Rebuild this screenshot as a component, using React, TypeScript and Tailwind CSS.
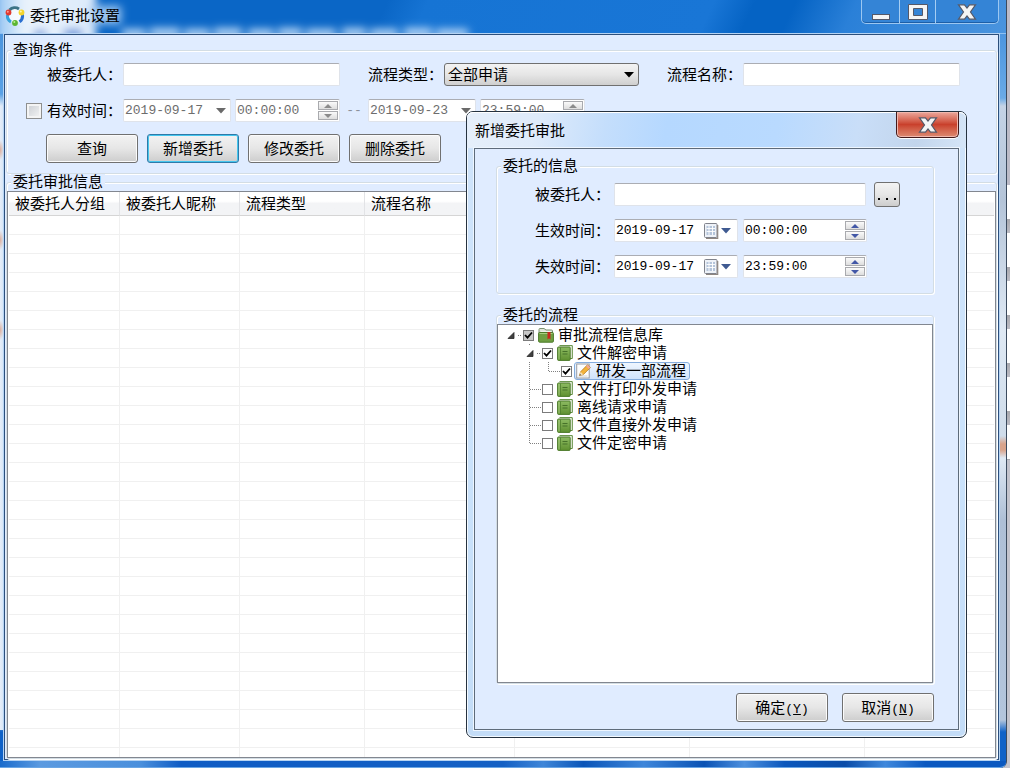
import { useState } from "react";
import type { ReactNode } from "react";

const group =
  "min-w-0 rounded-[3px] border border-[#d3dde4] shadow-[1px_1px_0_white,inset_1px_1px_0_white]";
const legend = "ml-1 bg-[#e0ecff] px-0.5 leading-4";
const field =
  "h-[23px] rounded-[2px] border border-[#dfe3ea] border-t-[#abadb3] bg-white";
const button =
  "h-[29px] w-[92px] rounded-[3px] border border-[#707070] bg-linear-to-b from-[#f3f3f3] via-[#e6e6e6] to-[#cdcdcd] text-center leading-none shadow-[inset_0_0_0_1px_#fbfbfb]";
const digits =
  "min-w-0 flex-1 bg-transparent pl-px font-['Liberation_Mono',monospace] text-[13px] outline-none";

function CloseGlyph() {
  return (
    <svg width="20" height="16" viewBox="0 0 20 16">
      <path
        d="M1.500 0.800H7.500L10 4L12.500 0.800H18.500L13.500 8L18.500 15.200H12.500L10 12L7.500 15.200H1.500L6.500 8Z"
        fill="#f4f4f4"
        stroke="#545868"
        strokeWidth="1.200"
      />
    </svg>
  );
}

function Logo() {
  return (
    <svg width="20" height="20" viewBox="0 0 20 20" aria-hidden="true">
      <circle cx="10" cy="10" r="7" fill="#ffffff" fillOpacity="0.800" />
      <g fill="none" strokeWidth="3">
        <path d="M4.500 4A7.600 7.600 0 0 1 14 3" stroke="#3c7386" />
        <path d="M17.300 8A7.600 7.600 0 0 1 14.500 15.800" stroke="#2a6fd0" />
        <path d="M2.400 9A7.600 7.600 0 0 0 6 16" stroke="#35a2dc" />
      </g>
      <circle cx="3.500" cy="6.500" r="2.900" fill="#e0392f" />
      <circle cx="16.500" cy="6.500" r="2.900" fill="#f4d42c" />
      <circle cx="10" cy="17" r="2.900" fill="#5cb531" />
      <circle cx="2.800" cy="5.700" r="1" fill="#ff9b90" />
      <circle cx="15.800" cy="5.600" r="1" fill="#fff7b0" />
      <circle cx="9.300" cy="16" r="1" fill="#b8ee90" />
    </svg>
  );
}

function Triangle({ color }: { color: string }) {
  return (
    <svg width="10" height="6" viewBox="0 0 10 6">
      <path d="M0 0H10L5 5.500Z" fill={color} />
    </svg>
  );
}

function CalendarGlyph() {
  return (
    <svg width="15" height="16" viewBox="0 0 15 16">
      <rect x="0.500" y="0.500" width="12.500" height="14" rx="1" fill="#eef2f8" stroke="#80838c" />
      <path d="M13.700 2V15.500H2" fill="none" stroke="#8d8580" strokeWidth="1.200" />
      <rect x="2.500" y="3" width="8.500" height="9" fill="#b4c4da" />
      <path d="M2.500 5.500H11M2.500 8.500H11M5 3V12M8.500 3V12" stroke="#ffffff" strokeWidth="0.900" />
    </svg>
  );
}

function Spinner({ disabled }: { disabled?: boolean }) {
  const color = disabled ? "#8b8b8b" : "#4257a6";
  const part =
    "grid h-[9px] w-5 place-items-center border border-[#a9aaae] bg-linear-to-b from-[#fafafa] to-[#dedede]";
  return (
    <span className="flex flex-col gap-px">
      <button type="button" aria-label="增加" disabled={disabled} className={part}>
        <svg width="8" height="4" viewBox="0 0 8 4">
          <path d="M4 0L8 4H0Z" fill={color} />
        </svg>
      </button>
      <button type="button" aria-label="减少" disabled={disabled} className={part}>
        <svg width="8" height="4" viewBox="0 0 8 4">
          <path d="M0 0H8L4 4Z" fill={color} />
        </svg>
      </button>
    </span>
  );
}

function QueryDate({ label, value }: { label: string; value: string }) {
  return (
    <span className={`${field} flex w-[108px] items-center pr-1`}>
      <input aria-label={label} disabled defaultValue={value} className={`${digits} text-[#6d6d6d]`} />
      <button type="button" aria-label="选择日期" disabled>
        <Triangle color="#6a6a6a" />
      </button>
    </span>
  );
}

function QueryTime({ label, value }: { label: string; value: string }) {
  return (
    <span className={`${field} flex w-[105px] items-center pr-px`}>
      <input aria-label={label} disabled defaultValue={value} className={`${digits} text-[#6d6d6d]`} />
      <Spinner disabled />
    </span>
  );
}

function DateTimeRow({ id, label, date, time }: { id: string; label: string; date: string; time: string }) {
  return (
    <div className="flex h-[23px] items-center">
      <label htmlFor={id} className="w-[79px]">
        {label}
      </label>
      <span className={`${field} flex w-[124px] items-center gap-0.5 pr-1.5`}>
        <input id={id} defaultValue={date} className={digits} />
        <button type="button" aria-label="选择日期" className="flex items-center gap-0.5">
          <CalendarGlyph />
          <Triangle color="#3f5a91" />
        </button>
      </span>
      <span className={`${field} ml-[5px] flex w-[124px] items-center pr-px`}>
        <input aria-label={`${label}时刻`} defaultValue={time} className={digits} />
        <Spinner />
      </span>
    </div>
  );
}

function BookIcon() {
  return (
    <svg width="16" height="16" viewBox="0 0 16 16">
      <defs>
        <linearGradient id="book" x1="0" y1="0" x2="0" y2="1">
          <stop offset="0" stopColor="#8dbb62" />
          <stop offset="1" stopColor="#5f9030" />
        </linearGradient>
      </defs>
      <path d="M2.500 0.600H15.300V13.500H13" fill="#f4f7ee" stroke="#5d8a3c" />
      <rect x="0.600" y="2" width="12.600" height="13.400" rx="0.800" fill="url(#book)" stroke="#4c7a2a" />
      <path d="M3.500 2.500V15" stroke="#4f7f2d" strokeWidth="0.800" />
      <path d="M5.500 6.500H10.500M5.500 9H10.500" stroke="#47722a" />
      <path d="M2 3V14.500" stroke="#a9cf83" strokeWidth="0.900" />
    </svg>
  );
}

function FolderIcon() {
  return (
    <svg width="16" height="16" viewBox="0 0 16 16">
      <path d="M1 5V2.500Q1 1.500 2 1.500H6L8 3H13.500Q14.500 3 14.500 4V7H1Z" fill="#dfe5d8" stroke="#7b9170" />
      <path d="M3 4.500H13V7H3Z" fill="#ffffff" />
      <rect x="0.600" y="5.500" width="14.800" height="9.700" rx="1" fill="#6f9f42" stroke="#4c7a2a" />
      <path d="M1.500 6.500H14.500" stroke="#a9cf83" />
      <path d="M9.500 5H12.500V12.500L11 11.300L9.500 12.500Z" fill="#c8281f" />
    </svg>
  );
}

function NoteIcon() {
  return (
    <svg width="16" height="16" viewBox="0 0 16 16">
      <rect x="0.700" y="1" width="12.500" height="14" fill="#fdfdfd" stroke="#9a9ca2" />
      <path d="M2.500 13H11.500" stroke="#d0d3d8" />
      <path d="M3.500 12.500L4.600 8.800L11.500 1.800L14.400 4.500L7.300 11.600Z" fill="#f3b33a" stroke="#b87a1c" strokeWidth="0.800" />
      <path d="M11.500 1.800L14.400 4.500L12.900 6L10.100 3.200Z" fill="#efa79a" />
      <path d="M3.500 12.500L4.600 8.800L7.300 11.600Z" fill="#f3dfba" />
      <path d="M3.500 12.500L4 10.900L5 12Z" fill="#333333" />
    </svg>
  );
}

function TreeCheck({ id, initial, grey }: { id: string; initial: boolean; grey?: boolean }) {
  const [on, setOn] = useState(initial);
  return (
    <span className="grid h-[11px] w-[11px] shrink-0">
      <input
        id={id}
        type="checkbox"
        checked={on}
        onChange={() => setOn(!on)}
        className={`col-start-1 row-start-1 h-[11px] w-[11px] appearance-none border border-[#7b7b7b] ${grey ? "bg-[#c8c8c8]" : "bg-white"}`}
      />
      {on && (
        <svg className="pointer-events-none col-start-1 row-start-1" width="11" height="11" viewBox="0 0 11 11">
          <path d="M2 5L4.500 7.700L9 2.500" fill="none" stroke="#000000" strokeWidth="1.800" />
        </svg>
      )}
    </span>
  );
}

type Guide = { width: number; arrow?: number; lines: string };
type Node = { id: string; label: string; guide: Guide; icon: ReactNode; on?: boolean; grey?: boolean; selected?: boolean };

const siblingGuide: Guide = { width: 44, lines: "M31.500 0V18M32 9.500H43" };
const nodes: Node[] = [
  { id: "n1", label: "审批流程信息库", guide: { width: 25, arrow: 10, lines: "M20 9.500H24" }, icon: <FolderIcon />, on: true, grey: true },
  { id: "n2", label: "文件解密申请", guide: { width: 44, arrow: 29, lines: "M39 9.500H43M31.500 0V2" }, icon: <BookIcon />, on: true },
  { id: "n3", label: "研发一部流程", guide: { width: 63, lines: "M31.500 0V18M50.500 0V9M51 9.500H62" }, icon: <NoteIcon />, on: true, selected: true },
  { id: "n4", label: "文件打印外发申请", guide: siblingGuide, icon: <BookIcon /> },
  { id: "n5", label: "离线请求申请", guide: siblingGuide, icon: <BookIcon /> },
  { id: "n6", label: "文件直接外发申请", guide: siblingGuide, icon: <BookIcon /> },
  { id: "n7", label: "文件定密申请", guide: { width: 44, lines: "M31.500 0V9M32 9.500H43" }, icon: <BookIcon /> },
];

function TreeRow({ node }: { node: Node }) {
  const { guide } = node;
  return (
    <li className="flex h-[18px] items-center">
      <svg className="shrink-0" width={guide.width} height="18" viewBox={`0 0 ${guide.width} 18`}>
        <path d={guide.lines} stroke="#808080" strokeDasharray="1 1" fill="none" />
        {guide.arrow !== undefined && (
          <path d={`M${guide.arrow} 12.500L${guide.arrow + 6} 6.500V12.500Z`} fill="#404040" stroke="#262626" strokeWidth="0.800" />
        )}
      </svg>
      <TreeCheck id={node.id} initial={!!node.on} grey={node.grey} />
      <label
        htmlFor={node.id}
        className={`ml-0.5 flex h-[18px] items-center gap-1 rounded-[3px] border px-px pr-[3px] leading-4 ${
          node.selected ? "border-[#84acdd] bg-linear-to-b from-[#eff6fe] to-[#cfe3fc]" : "border-transparent"
        }`}
      >
        {node.icon}
        <span>{node.label}</span>
      </label>
    </li>
  );
}

function Dialog() {
  return (
    <section
      role="dialog"
      aria-labelledby="dialog-title"
      className="absolute top-[111px] left-[466px] w-[501px] rounded-[7px] border border-[#26323f] bg-linear-to-b from-[#cfe3fa] via-[#cbe3fc] to-[#c3dcf7] p-[7px] pt-0 shadow-[inset_0_0_0_1px_#f4faff]"
    >
      <header className="-mx-[7px] flex h-9 justify-between rounded-t-[6px] bg-[linear-gradient(100deg,#e6effa_0,#dfebfa_14%,#c4defc_28%,#b5d8ff_40%,#b9daff_62%,#c9def8_78%,#c2d5ec_90%,#d6e6f8_100%)] pr-[7px] pl-2 shadow-[inset_0_1px_0_white]">
        <h2 id="dialog-title" className="pt-[10px] leading-[18px]">
          新增委托审批
        </h2>
        <button
          type="button"
          aria-label="关闭"
          className="grid h-[26px] w-[63px] place-items-center rounded-b-[5px] border border-t-0 border-[#43191a] bg-linear-to-b from-[#eba79c] from-0% via-[#c9402c] via-50% to-[#dc8a72] shadow-[inset_0_0_0_1px_#f0b8ae,0_1px_0_white]"
        >
          <CloseGlyph />
        </button>
      </header>
      <form
        className="border border-[#5e6b7a] bg-[#e0ecff] pt-[9px] pr-[24px] pb-[7px] pl-[21px] shadow-[0_0_0_1px_#eef6ff]"
        onSubmit={(e) => e.preventDefault()}
      >
        <fieldset className={group}>
          <legend className={legend}>委托的信息</legend>
          <div className="flex flex-col gap-[13px] pt-[9px] pb-[15px] pl-[38px]">
            <div className="flex h-[23px] items-center">
              <label htmlFor="delegate" className="w-[79px]">
                被委托人：
              </label>
              <input id="delegate" className={`${field} w-[252px]`} />
              <button
                type="button"
                aria-label="选择被委托人"
                className="ml-2 grid h-[25px] w-[26px] place-items-center rounded-[3px] border border-[#707070] bg-linear-to-b from-[#f3f3f3] via-[#e6e6e6] to-[#cdcdcd]"
              >
                <svg width="18" height="12" viewBox="0 0 18 12">
                  <path d="M0 9H2V11H0ZM8 9H10V11H8ZM16 9H18V11H16Z" fill="#000000" />
                </svg>
              </button>
            </div>
            <DateTimeRow id="start" label="生效时间：" date="2019-09-17" time="00:00:00" />
            <DateTimeRow id="end" label="失效时间：" date="2019-09-17" time="23:59:00" />
          </div>
        </fieldset>
        <fieldset className={`${group} mt-[13px]`}>
          <legend className={legend}>委托的流程</legend>
          <ul className="mt-px h-[359px] overflow-y-auto border border-[#828790] bg-white pt-px">
            {nodes.map((n) => (
              <TreeRow key={n.id} node={n} />
            ))}
          </ul>
        </fieldset>
        <div className="mt-[9px] flex justify-end gap-[14px]">
          <button type="submit" className={button}>
            确定
            <span className="font-['Liberation_Mono',monospace] text-[13px]">
              (<u>Y</u>)
            </span>
          </button>
          <button type="button" className={button}>
            取消
            <span className="font-['Liberation_Mono',monospace] text-[13px]">
              (<u>N</u>)
            </span>
          </button>
        </div>
      </form>
    </section>
  );
}

const columns = [
  { title: "被委托人分组", width: "w-[111px]" },
  { title: "被委托人昵称", width: "w-[120px]" },
  { title: "流程类型", width: "w-[125px]" },
  { title: "流程名称", width: "w-[150px]" },
  { title: "", width: "w-[175px]" },
  { title: "", width: "w-[175px]" },
  { title: "", width: "" },
];
const emptyRows = Array.from({ length: 28 }, (_, i) => i);

export default function App() {
  return (
    <div className="relative flex min-h-screen bg-[linear-gradient(180deg,#bcbbc7_0,#bcbbc7_185px,transparent_185px,transparent_460px,#c3c3cc_460px),repeating-linear-gradient(180deg,#ffffff_0,#ffffff_27px,#a9a9ae_27px,#bcbcc4_41px,#ffffff_41px,#ffffff_48px)] font-['Liberation_Sans','Noto_Sans_CJK_SC',sans-serif] text-[15px] leading-5 text-black">
      <main className="mr-[3px] flex min-w-0 flex-1 flex-col rounded-br-[7px] border-r border-[#3c4b5e] bg-[linear-gradient(180deg,#3c8bdc_0,#6aaae6_98px,#c5d3e6_106px,#b4c4d8_200px,#dfe9f4_330px,#cfdcea_436px,#d9a48c_444px,#d9a48c_450px,#dfe9f4_458px,#aebfd6_520px,#b3c5dc_720px,#0f62c8_732px)]">
        <header className="grid h-[34px] overflow-hidden border-b border-[#8fc1f2] bg-[linear-gradient(115deg,#0a66c6_0,#0a66c6_38%,#1674d4_42%,#1976d6_70%,#0563c4_74%,#0563c4_78%,#2a80d8_84%,#4a94de_100%)]">
          <svg className="col-start-1 row-start-1 h-[34px] w-full" aria-hidden="true">
            <defs>
              <filter id="soft" x="-20%" y="-50%" width="140%" height="200%">
                <feGaussianBlur stdDeviation="4" />
              </filter>
              <linearGradient id="glow">
                <stop offset="0" stopColor="#8cc0f2" />
                <stop offset="0.300" stopColor="#eaf3fc" />
                <stop offset="1" stopColor="#dceafa" />
              </linearGradient>
            </defs>
            <g filter="url(#soft)">
              <rect x="-6" y="-16" width="102" height="64" fill="url(#glow)" />
              <rect x="90" y="6" width="31" height="18" fill="#9cc6f0" />
              <path d="M34 31H46V38H34ZM64 30H82V38H64Z" fill="#2a7fd6" />
              <path
                d="M122 34H146M150 33H180M184 34H210M214 33H242M248 34H274M278 33H302M306 34H336M342 33H366M370 34H398M404 33H432M436 34H468"
                stroke="#b4d4f5"
                strokeWidth="10"
              />
            </g>
          </svg>
          <div className="z-10 col-start-1 row-start-1 flex items-start justify-between pr-[7px] pl-[5px]">
            <h1 className="flex items-center gap-[5px] pt-1.5">
              <Logo />
              委托审批设置
            </h1>
            <div className="flex h-6 divide-x divide-[#a5cdf3] rounded-b-[5px] border border-t-0 border-[#9cc7f1] bg-[#3484d6] shadow-[inset_0_-1px_0_#1c5fa8]">
              <button type="button" aria-label="最小化" className="grid w-[38px] place-items-center">
                <svg width="18" height="16" viewBox="0 0 18 16">
                  <rect x="0.500" y="10.500" width="17" height="5" fill="#f5f5f5" stroke="#545868" />
                </svg>
              </button>
              <button type="button" aria-label="最大化" className="grid w-9 place-items-center">
                <svg width="20" height="16" viewBox="0 0 20 16">
                  <path d="M0.500 0.500H19.500V15.500H0.500ZM5.500 4.500V11.500H14.500V4.500Z" fillRule="evenodd" fill="#f5f5f5" stroke="#545868" />
                </svg>
              </button>
              <button type="button" aria-label="关闭窗口" className="grid w-[62px] place-items-center">
                <CloseGlyph />
              </button>
            </div>
          </div>
        </header>

        <div className="flex flex-1 bg-[radial-gradient(4px_10px_at_0_116px,#dcae9c,transparent),radial-gradient(4px_10px_at_0_206px,#dcae9c,transparent),radial-gradient(4px_10px_at_0_296px,#dcae9c,transparent),linear-gradient(180deg,#4a94de_0,#5aa2e6_60px,transparent_72px),linear-gradient(90deg,#e6eef9_0,#d4e4f6_4px,transparent_5px)] bg-[length:4px_696px,4px_696px,4px_696px,4px_696px,100%_696px] bg-no-repeat pr-[7px] pl-1">
          <div className="flex min-w-0 flex-1 flex-col border border-[#2c4f7c] bg-[#e0ecff] px-px pt-[7px] shadow-[0_0_0_1px_#b5d3f3]">
            <fieldset className={`${group} pb-[10px]`}>
              <legend className={legend}>查询条件</legend>
              <div className="mt-[5px] flex items-center gap-7 pl-10">
                <div className="flex items-center">
                  <label htmlFor="q-person" className="w-[76px]">
                    被委托人：
                  </label>
                  <input id="q-person" className={`${field} w-[217px]`} />
                </div>
                <div className="flex items-center">
                  <label htmlFor="q-type" className="w-[76px]">
                    流程类型：
                  </label>
                  <span className="grid w-[195px] items-center">
                    <select
                      id="q-type"
                      className="col-start-1 row-start-1 h-[23px] appearance-none rounded-[3px] border border-[#707070] bg-linear-to-b from-[#f3f3f3] via-[#e6e6e6] to-[#cfcfcf] pl-[3px] leading-5"
                    >
                      <option>全部申请</option>
                    </select>
                    <span className="pointer-events-none col-start-1 row-start-1 justify-self-end pr-[5px]">
                      <Triangle color="#000000" />
                    </span>
                  </span>
                </div>
                <div className="flex items-center">
                  <label htmlFor="q-name" className="w-[76px]">
                    流程名称：
                  </label>
                  <input id="q-name" className={`${field} w-[217px]`} />
                </div>
              </div>
              <div className="mt-[13px] flex h-[23px] items-center pl-[19px]">
                <input
                  id="q-time"
                  type="checkbox"
                  className="h-4 w-4 appearance-none border border-[#8e8f8f] bg-linear-to-br from-[#c9cdd2] to-[#f6f6f6] shadow-[inset_0_0_0_2px_#f4f4f4]"
                />
                <label htmlFor="q-time" className="ml-[5px] w-[76px]">
                  有效时间：
                </label>
                <QueryDate label="开始日期" value="2019-09-17" />
                <span className="ml-1 flex">
                  <QueryTime label="开始时刻" value="00:00:00" />
                </span>
                <span className="w-7 text-center font-['Liberation_Mono',monospace] text-[13px] text-[#8b919b]">--</span>
                <QueryDate label="结束日期" value="2019-09-23" />
                <span className="ml-1 flex">
                  <QueryTime label="结束时刻" value="23:59:00" />
                </span>
              </div>
              <div className="mt-3 flex gap-[9px] pl-[39px]">
                <button type="button" className={button}>
                  查询
                </button>
                <button
                  type="button"
                  className="h-[29px] w-[92px] rounded-[3px] border border-[#2f7aa8] bg-linear-to-b from-[#f3f3f3] via-[#e6e6e6] to-[#cdcdcd] leading-none shadow-[inset_0_0_0_1px_#45c6ee]"
                >
                  新增委托
                </button>
                <button type="button" className={button}>
                  修改委托
                </button>
                <button type="button" className={button}>
                  删除委托
                </button>
              </div>
            </fieldset>

            <fieldset className={`${group} flex-1`}>
              <legend className={legend}>委托审批信息</legend>
              <div className="mt-px border border-[#828790] bg-white px-px">
                <table className="w-full table-fixed border-separate border-spacing-0">
                  <thead>
                    <tr>
                      {columns.map((c, i) => (
                        <th
                          key={i}
                          scope="col"
                          className={`${c.width} h-6 border-b border-[#d5d5d5] bg-linear-to-b from-white from-40% to-[#f3f4f6] to-50% p-0 pl-1.5 text-left leading-5 font-normal not-last:border-r not-last:border-r-[#e2e3e6]`}
                        >
                          {c.title}
                        </th>
                      ))}
                    </tr>
                  </thead>
                  <tbody>
                    {emptyRows.map((r) => (
                      <tr key={r}>
                        {columns.map((_, i) => (
                          <td key={i} className="h-[19px] border-b border-[#f0f0f0] p-0 not-last:border-r" />
                        ))}
                      </tr>
                    ))}
                    <tr>
                      {columns.map((_, i) => (
                        <td key={i} className="h-[9px] border-[#f0f0f0] p-0 not-last:border-r" />
                      ))}
                    </tr>
                  </tbody>
                </table>
              </div>
            </fieldset>
          </div>
        </div>
        <footer className="mt-px h-[7px] rounded-br-[6px] border-b border-[#6ba6e4] bg-[linear-gradient(90deg,#1a6bcc_0,#5b9ae0_4%,#4a8fdc_14%,#0f5cc4_18%,#1460c4_50%,#3f86d8_54%,#0a55b8_58%,#3e86da_64%,#0a52b4_70%,#4d90de_74%,#0b57bc_78%,#0a4ca8_84%,#3f88dc_88%,#0a58c0_92%)]" />
      </main>
      <Dialog />
    </div>
  );
}
